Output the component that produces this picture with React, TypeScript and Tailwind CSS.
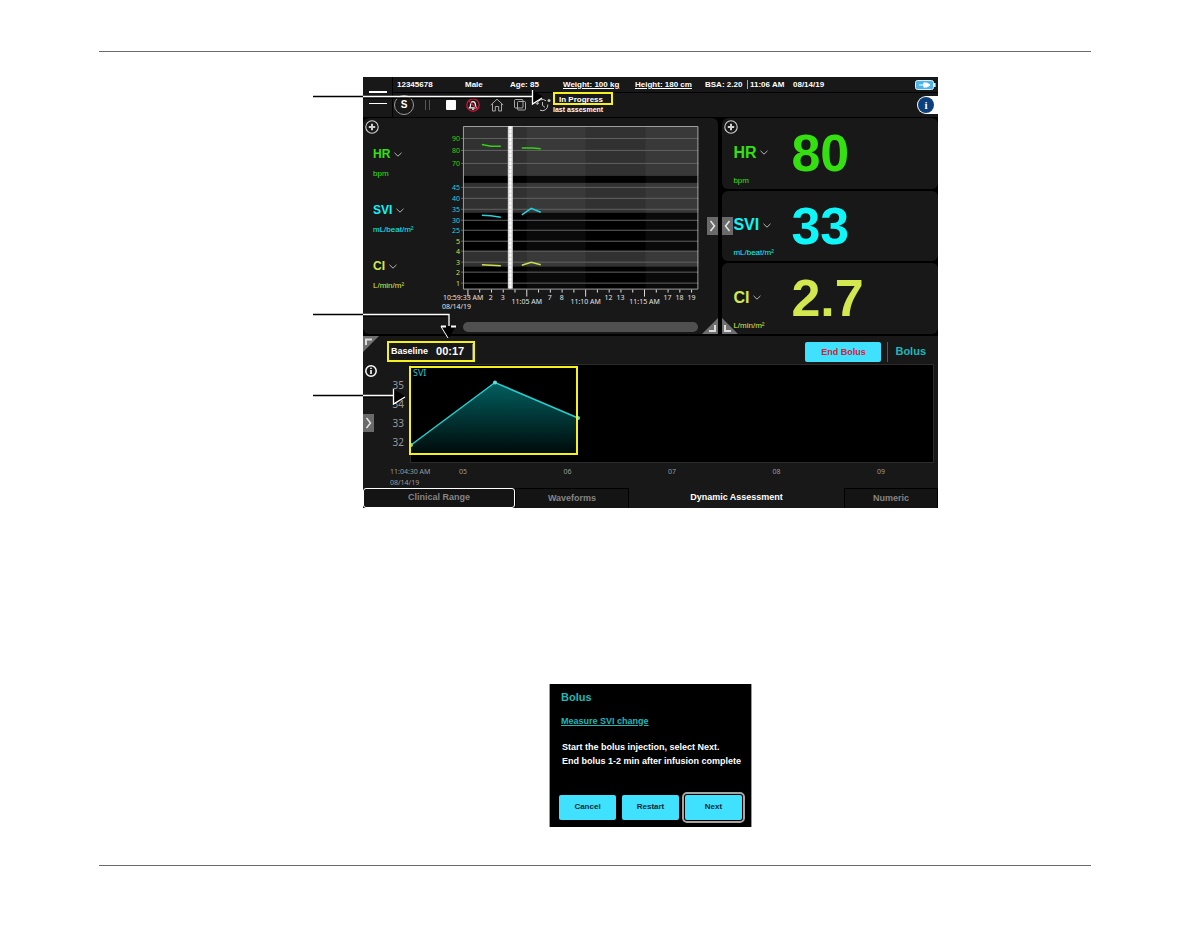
import React, { useState } from 'react';

type Tone = 'green' | 'cyan' | 'lime';

interface Vital {
  name: string;
  unit: string;
  value: string;
  tone: Tone;
}

const vitals: Vital[] = [
  { name: 'HR', unit: 'bpm', value: '80', tone: 'green' },
  { name: 'SVI', unit: 'mL/beat/m²', value: '33', tone: 'cyan' },
  { name: 'CI', unit: 'L/min/m²', value: '2.7', tone: 'lime' },
];

const toneText: Record<Tone, string> = {
  green: 'text-[#35e010]',
  cyan: 'text-[#0ff5f8]',
  lime: 'text-[#d2e84e]',
};

const toneHex: Record<Tone, string> = {
  green: '#35d016',
  cyan: '#22d3dc',
  lime: '#cfe04c',
};

const ChevronDown = () => (
  <svg viewBox="0 0 8 5" className="w-2 h-[5px]" fill="none" stroke="#b5b5b5" strokeWidth="1">
    <path d="M0.5 0.8 4 4.2 7.5 0.8" />
  </svg>
);

const PlusButton = () => (
  <button className="block w-[14px] h-[14px]" title="Add parameter">
    <svg viewBox="0 0 14 14" fill="none" stroke="#d0d0d0">
      <circle cx="7" cy="7" r="6.2" strokeWidth="1.1" />
      <path d="M7 3.8v6.4M3.8 7h6.4" strokeWidth="2" />
    </svg>
  </button>
);

const SideHandle: React.FC<{ dir: 'left' | 'right'; className: string }> = ({ dir, className }) => (
  <button className={`absolute w-[11px] h-[18px] bg-[#6a6a6a] ${className}`} title="Expand panel">
    <svg viewBox="0 0 11 18" fill="none" stroke="#e6e6e6" strokeWidth="1.5">
      <path d={dir === 'right' ? 'M3.5 4 7.5 9 3.5 14' : 'M7.5 4 3.5 9 7.5 14'} />
    </svg>
  </button>
);

const CornerHandle: React.FC<{ corner: 'tl' | 'bl' | 'br'; className: string }> = ({ corner, className }) => {
  const shapes = {
    tl: { fill: 'M0 0H16L0 16Z', mark: 'M3 9V3.5H9' },
    bl: { fill: 'M0 0V16H16Z', mark: 'M3 7V13H9' },
    br: { fill: 'M16 0V16H0Z', mark: 'M13 7V13H7' },
  };
  return (
    <button className={`absolute w-4 h-4 ${className}`} title="Resize panel">
      <svg viewBox="0 0 16 16">
        <path d={shapes[corner].fill} fill="#6f6f6f" />
        <path d={shapes[corner].mark} fill="none" stroke="#dcdcdc" strokeWidth="2" />
      </svg>
    </button>
  );
};

const patient = [
  { text: '12345678' },
  { text: 'Male' },
  { text: 'Age: 85' },
  { text: 'Weight: 100 kg', link: true },
  { text: 'Height: 180 cm', link: true },
  { text: 'BSA: 2.20' },
  { text: '11:06 AM', divider: true },
  { text: '08/14/19' },
];

const Header = () => (
  <header className="flex border-b border-black bg-[#181818] text-white">
    <button className="w-[30px] border-r border-black flex flex-col items-center justify-center gap-[10px]" title="Menu">
      <span className="w-[18px] h-[2px] bg-white" />
      <span className="w-[18px] h-px bg-white" />
    </button>
    <div className="flex-1 min-w-0">
      <div className="h-4 flex items-center border-b border-black pl-1 pr-[2px] text-[8px] leading-4 font-bold whitespace-nowrap">
        <div className="flex-1 grid grid-cols-[68fr_45fr_53fr_72fr_70fr_42fr_46fr_122fr]">
          {patient.map((p) => (
            <span key={p.text} className="flex items-center min-w-0">
              {p.divider && <i className="w-px h-[9px] bg-[#aaa] mr-[2px]" />}
              {p.link ? (
                <a href="#patient" className="underline underline-offset-1">{p.text}</a>
              ) : (
                p.text
              )}
            </span>
          ))}
        </div>
        <svg viewBox="0 0 21 10" className="w-[21px] h-[10px]">
          <rect x="0.5" y="0.5" width="18" height="9" rx="2" fill="#4fb4e8" stroke="#d9eefa" />
          <rect x="19" y="3" width="1.6" height="4" fill="#d9eefa" />
          <path d="M4 5h5M9 2.500v5M9 3h3l3 2-3 2H9Z" fill="#fff" stroke="#fff" />
        </svg>
      </div>
      <div className="h-6 flex items-center">
        <button className="ml-[1px] w-5 h-5 rounded-full border border-[#999] text-[10px] leading-[18px] font-bold">S</button>
        <button className="ml-2 w-[10px] h-[10px] flex justify-center gap-[3px]" title="Pause">
          <i className="w-px h-full bg-[#555]" />
          <i className="w-px h-full bg-[#555]" />
        </button>
        <button className="ml-[14px] w-[10px] h-[10px] rounded-[1px] bg-white" title="Stop" />
        <button className="ml-[10px] w-[14px] h-[14px]" title="Silence alarm">
          <svg viewBox="0 0 14 14" fill="none">
            <path d="M3.6 9.8c1-.8.8-2 1-3.5C4.9 4.6 5.8 3.7 7 3.7s2.1.9 2.4 2.600c.2 1.5 0 2.7 1 3.5Z" stroke="#f0f0f0" strokeWidth="1.3" />
            <path d="M6 11.2h2.2" stroke="#f0f0f0" strokeWidth="1.2" />
            <circle cx="7" cy="7" r="6.2" stroke="#d3173a" strokeWidth="1.3" />
            <path d="m2.7 2.7 8.6 8.6" stroke="#d3173a" strokeWidth="1.3" />
          </svg>
        </button>
        <button className="ml-[10px] w-[14px] h-[14px]" title="Home">
          <svg viewBox="0 0 14 14" fill="none" stroke="#a8a8a8" strokeWidth="1">
            <path d="M0.8 7 7 1.2 13.2 7M2.5 5.8V13H5.3V8.5H8.7V13H11.5V5.8" />
          </svg>
        </button>
        <button className="ml-[9px] w-[14px] h-[14px]" title="Screens">
          <svg viewBox="0 0 14 14" fill="none" stroke="#a8a8a8" strokeWidth="1">
            <rect x="1.5" y="1.5" width="8.5" height="8.5" rx="1" />
            <rect x="4.5" y="3.5" width="8" height="8.5" rx="1" />
          </svg>
        </button>
        <button className="ml-2 w-4 h-[14px]" title="History">
          <svg viewBox="0 0 16 14" fill="none" stroke="#bdbdbd" strokeWidth="1">
            <path d="M2 6a5.5 5.5 0 0 1 9-3.2M12.8 6.5A5.5 5.5 0 0 1 5 12.2M7.5 4v3.5l2.5 1.8M0.5 4.5 2 6.5l2-1.5" />
            <circle cx="14" cy="2.5" r="1.5" fill="#bdbdbd" stroke="none" />
          </svg>
        </button>
        <div className="ml-[2px] h-6 flex flex-col font-bold whitespace-nowrap">
          <span className="w-[60px] h-[13px] -mt-px border-2 border-[#f6f01c] px-1 text-[8px] leading-[12px] shrink-0">In Progress</span>
          <span className="text-[7px] leading-[10px]">last assesment</span>
        </div>
        <button className="ml-auto w-[21px] h-[18px] rounded-l-full bg-white flex items-center pl-[1px]" title="Information">
          <span className="w-4 h-4 rounded-full bg-[#0b3f7d] text-[11px] leading-4 font-bold font-['Liberation_Serif',serif]">i</span>
        </button>
      </div>
    </div>
  </header>
);

// rows of the trend chart, one label per grid line
const trendLines: { y: number; label: string; tone: Tone }[] = [
  { y: 16, label: '90', tone: 'green' },
  { y: 28, label: '80', tone: 'green' },
  { y: 41, label: '70', tone: 'green' },
  { y: 65, label: '45', tone: 'cyan' },
  { y: 76, label: '40', tone: 'cyan' },
  { y: 87, label: '35', tone: 'cyan' },
  { y: 98, label: '30', tone: 'cyan' },
  { y: 108, label: '25', tone: 'cyan' },
  { y: 119, label: '5', tone: 'lime' },
  { y: 129, label: '4', tone: 'lime' },
  { y: 140, label: '3', tone: 'lime' },
  { y: 150, label: '2', tone: 'lime' },
  { y: 161, label: '1', tone: 'lime' },
];

const bands = [
  { y: 4, h: 50 },
  { y: 61, h: 30 },
  { y: 129, h: 16 },
];

const traces: { tone: Tone; points: string }[] = [
  { tone: 'green', points: '47,22.5 56,24.3 66,24.3' },
  { tone: 'green', points: '87,26 98,26 106,26.7' },
  { tone: 'cyan', points: '47,93.5 56,94 66,95.5' },
  { tone: 'cyan', points: '87,93 96.5,86.5 106,90.5' },
  { tone: 'lime', points: '47,143 66,144' },
  { tone: 'lime', points: '87,143.5 96.5,140.7 106,143' },
];

const timeLabels = [
  { x: 56, text: '2' },
  { x: 68, text: '3' },
  { x: 115, text: '7' },
  { x: 127, text: '8' },
  { x: 174, text: '12' },
  { x: 186, text: '13' },
  { x: 233, text: '17' },
  { x: 245, text: '18' },
  { x: 257, text: '19' },
];

const majorTimes = [
  { x: 92, text: '11:05 AM' },
  { x: 151, text: '11:10 AM' },
  { x: 210, text: '11:15 AM' },
];

const TrendChart = () => (
  <svg viewBox="0 0 270 194" className="w-full h-auto font-['Noto_Sans',sans-serif] text-[7px]">
    <rect x="28" y="4" width="236" height="163" fill="#000" />
    {bands.map((b) => (
      <rect key={b.y} x="28" y={b.y} width="236" height={b.h} fill="#313131" />
    ))}
    <path d="M92 4h59v163H92ZM211 4h53v163h-53Z" fill="#fff" fillOpacity="0.04" />
    {trendLines.map((l) => (
      <g key={l.label}>
        <path d={`M26 ${l.y + 0.5}H264`} stroke="#626262" strokeWidth="1" />
        <text x="25" y={l.y + 3} textAnchor="end" fill={toneHex[l.tone]}>{l.label}</text>
      </g>
    ))}
    <path d="M28.5 167.5V4.5H263.5V167.5Z" fill="none" stroke="#a0a0a0" />
    {traces.map((t) => (
      <polyline key={t.points} points={t.points} fill="none" stroke={toneHex[t.tone]} strokeWidth="1.5" />
    ))}
    <rect x="73" y="4" width="5" height="163" fill="#d8d8d8" />
    <path d="M75.5 4V167" stroke="#fff" strokeWidth="2" strokeDasharray="3 1" />
    {Array.from({ length: 20 }, (_, i) => (
      <path key={i} d={`M${33 + i * 11.8} 168v${i % 5 === 0 ? 7 : 3}`} stroke="#ddd" />
    ))}
    <g fill="#e2e2e2">
      <text x="8" y="178">10:59:33 AM</text>
      <text x="7" y="187">08/14/19</text>
      {timeLabels.map((t) => (
        <text key={t.text} x={t.x} y="178" textAnchor="middle">{t.text}</text>
      ))}
      {majorTimes.map((t) => (
        <text key={t.text} x={t.x} y="182" textAnchor="middle">{t.text}</text>
      ))}
    </g>
  </svg>
);

const TrendPanel = () => (
  <section className="relative flex bg-[#181818] rounded-md pr-[14px] pb-[2px]">
    <div className="w-[72px] shrink-0">
      <div className="h-7 pl-[2px] pt-[2px]"><PlusButton /></div>
      {vitals.map((v) => (
        <div key={v.name} className={`h-14 pl-[10px] whitespace-nowrap ${toneText[v.tone]}`}>
          <button className="flex items-center gap-1 text-[12px] leading-4 font-bold">
            {v.name}
            <ChevronDown />
          </button>
          <div className="mt-1 text-[8px] leading-4">{v.unit}</div>
        </div>
      ))}
    </div>
    <div className="flex-1 min-w-0 pt-1">
      <TrendChart />
      <div className="mt-[6px] ml-7 mr-[6px] h-[10px] rounded-full bg-[#505050]" />
    </div>
    <SideHandle dir="right" className="right-0 top-[99px]" />
    <CornerHandle corner="br" className="right-0 bottom-0" />
  </section>
);

const NumericPanels = () => (
  <div className="relative grid grid-rows-3 gap-[2px]">
    {vitals.map((v) => (
      <section key={v.name} className={`flex items-center bg-[#181818] rounded-md pl-[11px] ${toneText[v.tone]}`}>
        <div className="w-[58px] shrink-0 self-end whitespace-nowrap">
          <button className="flex items-center gap-1 text-[16px] leading-5 font-bold">
            {v.name}
            <ChevronDown />
          </button>
          <div className="mt-[10px] text-[8px] leading-4">{v.unit}</div>
        </div>
        <div className="text-[52px] leading-[60px] font-bold">{v.value}</div>
      </section>
    ))}
    <div className="absolute left-[2px] top-[2px]"><PlusButton /></div>
    <SideHandle dir="left" className="left-0 top-[99px]" />
    <CornerHandle corner="bl" className="left-0 bottom-0" />
  </div>
);

const sviScale = [
  { y: 25, text: '35' },
  { y: 44, text: '34' },
  { y: 63, text: '33' },
  { y: 82, text: '32' },
];

const minutes = ['05', '06', '07', '08', '09'];

const BolusChart = () => (
  <svg viewBox="0 0 552 124" className="w-full h-auto font-['Noto_Sans',sans-serif] text-[7px]">
    <defs>
      <linearGradient id="svi" x1="0" y1="0" x2="0" y2="1">
        <stop offset="0" stopColor="#025f5f" />
        <stop offset="0.5" stopColor="#013434" />
        <stop offset="1" stopColor="#000a0a" />
      </linearGradient>
    </defs>
    <rect x="24.5" y="0.5" width="523" height="98" fill="#000" stroke="#2c2c2c" />
    <path d="M25 81 109 18.5 192 54V90H25Z" fill="url(#svi)" />
    <path d="M25 81 109 18.5 192 54" fill="none" stroke="#25d0d0" strokeWidth="1.5" />
    <circle cx="25" cy="81" r="2" fill="#5fdede" />
    <circle cx="109" cy="18.5" r="2" fill="#5fdede" />
    <circle cx="192" cy="54" r="2" fill="#5fdede" />
    <rect x="24" y="3" width="167" height="87" fill="none" stroke="#f6f01c" strokeWidth="2" />
    <text x="27" y="12" className="text-[9px]" fill="#22c8cc">SVI</text>
    {sviScale.map((s) => (
      <text key={s.text} x="18" y={s.y} textAnchor="end" className="text-[10px]" fill="#9a9a9a">{s.text}</text>
    ))}
    <g fill="#9a9a9a">
      <text x="4" y="110">11:04:30 AM</text>
      <text x="4" y="121">08/14/19</text>
      {minutes.map((m, i) => (
        <text key={m} x={77 + i * 104.5} y="110" textAnchor="middle">{m}</text>
      ))}
    </g>
  </svg>
);

const BolusPanel = () => (
  <section className="relative mt-[2px] flex bg-[#181818]">
    <CornerHandle corner="tl" className="left-0 top-0" />
    <div className="w-[23px] shrink-0 pt-6 pl-[2px]">
      <button className="w-3 h-3" title="Details">
        <svg viewBox="0 0 12 12" fill="none" stroke="#fff">
          <circle cx="6" cy="6" r="5.2" strokeWidth="1.5" />
          <path d="M6 5v4M6 2.7v1.3" strokeWidth="1.6" />
        </svg>
      </button>
    </div>
    <SideHandle dir="right" className="left-0 top-[78px]" />
    <div className="flex-1 min-w-0">
      <div className="h-7 flex items-center pt-1 pr-3 font-bold text-white">
        <div className="ml-px w-[88px] h-[21px] border-2 border-[#f6f01c] flex items-center gap-2 pl-[2px]">
          <span className="text-[9px]">Baseline</span>
          <span className="text-[11px]">00:17</span>
          <i className="w-px h-4 bg-[#777]" />
        </div>
        <button className="ml-auto w-[76px] h-5 rounded-[2px] bg-[#40e0ff] text-[#d2232f] text-[9px] leading-5">End Bolus</button>
        <i className="ml-[6px] w-px h-5 bg-[#555]" />
        <span className="ml-[7px] text-[11px] text-[#1fb8b8]">Bolus</span>
      </div>
      <BolusChart />
    </div>
  </section>
);

const Tabs = () => {
  const [active, setActive] = useState('Dynamic Assessment');
  const tabs = ['Clinical Range', 'Waveforms', 'Dynamic Assessment', 'Numeric'];

  return (
    <nav className="h-5 grid grid-cols-[152fr_114fr_215fr_94fr] bg-[#181818] text-[9px] font-bold whitespace-nowrap">
      {tabs.map((tab) => (
        <button
          key={tab}
          onClick={() => setActive(tab)}
          className={`pt-px ${active === tab ? 'text-white' : 'text-[#858585] border-x border-t border-black bg-[#141414]'} ${tab === 'Clinical Range' ? 'rounded-[3px] border border-white!' : ''}`}
        >
          {tab}
        </button>
      ))}
    </nav>
  );
};

// leader lines: dark on the paper, light once they cross the device screen
const Callouts = () => (
  <svg viewBox="0 0 240 330" className="absolute -left-[50px] top-0 w-[240px] h-[330px] pointer-events-none" fill="none">
    <g stroke="#000" strokeWidth="1.5">
      <path d="M0 19.5H50M0 237.5H50M0 318.5H50" />
      <path d="M50 21H219M50 239H134M50 320H80" />
    </g>
    <g stroke="#fff" strokeWidth="1.3">
      <path d="M50 19.5H219M50 237.5H136V249M50 318.5H80" />
    </g>
    <path d="M219 13 230 19.5 219 27Z" fill="#000" />
    <path d="M219.5 13V27L229 21" stroke="#fff" strokeWidth="1.3" />
    <path d="M128 249H143L136 261Z" fill="#000" />
    <path d="M128 249.500H133M138 249.500H143" stroke="#fff" strokeWidth="2" />
    <path d="M128 249.500 135 261" stroke="#fff" />
    <path d="M80 312 92 319 80 327Z" fill="#000" />
    <path d="M80.5 312V327L92 320" stroke="#fff" strokeWidth="1.3" />
  </svg>
);

const Monitor = () => (
  <div className="relative ml-[264px] mr-[153px] bg-black">
    <Header />
    <div className="grid grid-cols-[89fr_54fr] gap-1">
      <TrendPanel />
      <NumericPanels />
    </div>
    <BolusPanel />
    <Tabs />
    <Callouts />
  </div>
);

const BolusDialog = () => (
  <section className="mt-44 ml-[450px] w-[203px] border-x border-[#999] bg-black pt-[7px] pb-[7px] px-[9px] font-bold text-white whitespace-nowrap">
    <h2 className="pl-[2px] text-[11px] leading-3 text-[#1fb8b8]">Bolus</h2>
    <a href="#svi-change" className="block mt-3 pl-[2px] text-[9px] leading-3 text-[#1fb8b8] underline underline-offset-1">Measure SVI change</a>
    <p className="mt-[13px] pl-[3px] text-[9px] leading-[14px]">
      Start the bolus injection, select Next.
      <br />
      End bolus 1-2 min after infusion complete
    </p>
    <div className="mt-[27px] grid grid-cols-3 gap-[6px] text-[8px] text-[#0c2a33]">
      <button className="h-[25px] rounded-[2px] bg-[#40e0ff]">Cancel</button>
      <button className="h-[25px] rounded-[2px] bg-[#40e0ff]">Restart</button>
      <button className="h-[25px] rounded-[2px] bg-[#40e0ff] outline-2 outline-offset-1 outline-[#a5a5a5]">Next</button>
    </div>
  </section>
);

export default function App() {
  return (
    <main className="min-h-screen bg-white px-[99px] pt-[51px] font-['Liberation_Sans',Arial,sans-serif]">
      <hr className="mb-[25px] border-[#6b6b6b]" />
      <Monitor />
      <BolusDialog />
      <hr className="mt-[38px] border-[#6b6b6b]" />
    </main>
  );
}
